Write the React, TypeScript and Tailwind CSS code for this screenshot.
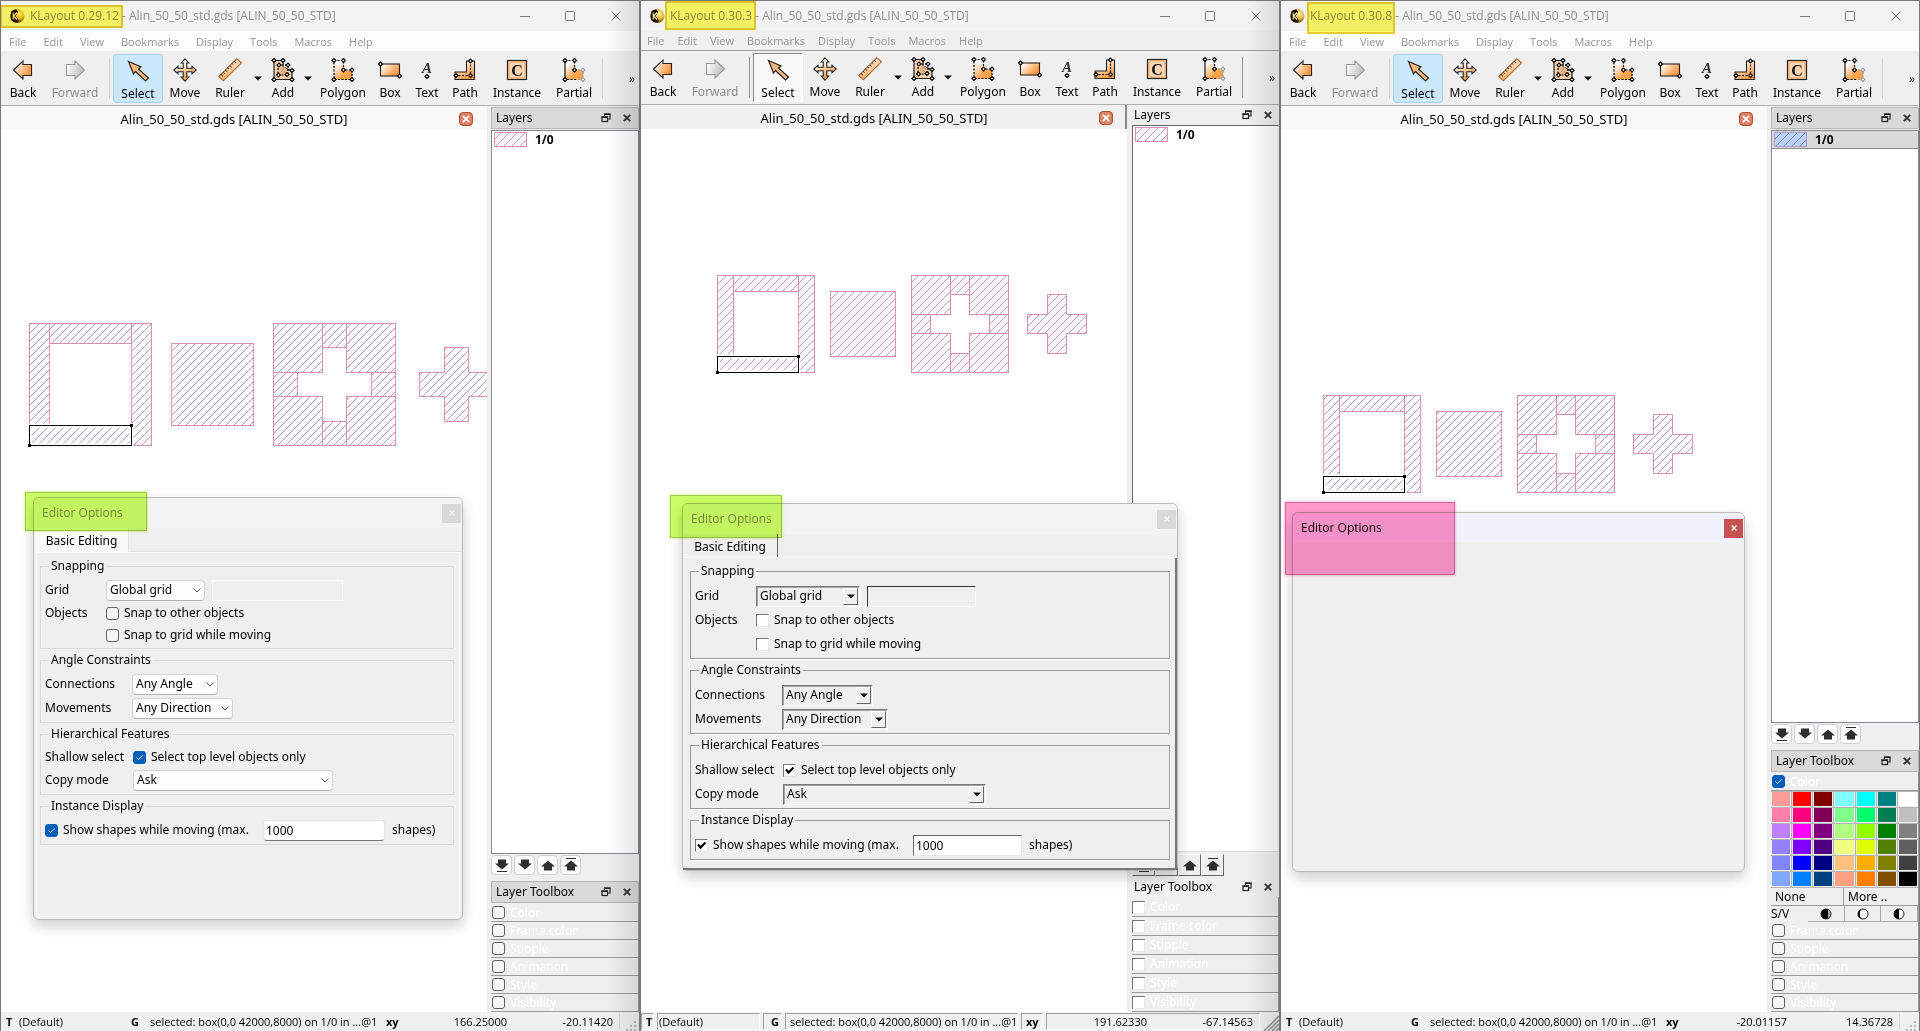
import clsx from "clsx";

type Pane = {
  version: string;
  classic?: boolean;
  file: string;
  mark: string;
  x: string;
  y: string;
  shapes: { x: number; y: number; scale: number };
  layerSelected?: boolean;
  paletteOpen?: boolean;
};

const FILE_NAME = "Alin_50_50_std.gds [ALIN_50_50_STD]";

const panes: Pane[] = [
  {
    version: "0.29.12",
    file: FILE_NAME,
    mark: "left-[-1px] top-1 h-[23px] w-[123px]",
    x: "166.25000",
    y: "-20.11420",
    shapes: { x: 28, y: 193, scale: 2.44 },
  },
  {
    version: "0.30.3",
    classic: true,
    file: FILE_NAME,
    mark: "left-6 top-0 h-[29px] w-[91px]",
    x: "191.62330",
    y: "-67.14563",
    shapes: { x: 76, y: 146, scale: 1.94 },
  },
  {
    version: "0.30.8",
    file: FILE_NAME,
    mark: "left-[26px] top-px h-8 w-[88px]",
    x: "-20.01157",
    y: "14.36728",
    shapes: { x: 42, y: 265, scale: 1.94 },
    layerSelected: true,
    paletteOpen: true,
  },
];

const menus = ["File", "Edit", "View", "Bookmarks", "Display", "Tools", "Macros", "Help"];

const palette = [
  "#ff9d9d", "#ff0000", "#800000", "#80ffff", "#00ffff", "#008080", "#ffffff",
  "#ff80a8", "#ff0080", "#800057", "#80ff8d", "#00ff6b", "#008050", "#c0c0c0",
  "#c080ff", "#ff00ff", "#800080", "#b0ff80", "#91ff00", "#008000", "#808080",
  "#9580ff", "#8000ff", "#500080", "#f0ff80", "#ddff00", "#508000", "#606060",
  "#8086ff", "#0000ff", "#000080", "#ffc280", "#ffae00", "#808000", "#404040",
  "#80a8ff", "#0080ff", "#004080", "#ffa080", "#ff8000", "#805000", "#000000",
];

/* ---------- icons ---------- */

function Defs() {
  return (
    <svg className="absolute h-0 w-0" aria-hidden="true">
      <defs>
        <linearGradient id="orange" x1="0" y1="0" x2="1" y2="0.6">
          <stop offset="0.1" stopColor="#fff" />
          <stop offset="0.9" stopColor="#ff9a40" />
        </linearGradient>
        <linearGradient id="orangeDown" x1="0.2" y1="0" x2="0.7" y2="1">
          <stop offset="0.1" stopColor="#fff" />
          <stop offset="0.9" stopColor="#ff9a40" />
        </linearGradient>
        <linearGradient id="silver" x1="0" y1="0" x2="1" y2="0.4">
          <stop offset="0.1" stopColor="#fff" />
          <stop offset="0.9" stopColor="#c4c4c4" />
        </linearGradient>
        <radialGradient id="gold" cx="0.65" cy="0.35" r="0.7">
          <stop offset="0" stopColor="#fff3b0" />
          <stop offset="0.5" stopColor="#e0b03a" />
          <stop offset="1" stopColor="#5a3c08" />
        </radialGradient>
        <pattern id="hatch" width="8" height="8" patternUnits="userSpaceOnUse">
          <path d="M-1 9L9 -1M-1 1L1 -1M7 9L9 7" stroke="#c878a0" strokeWidth="0.8" fill="none" />
        </pattern>
        <pattern id="hatchBlue" width="8" height="8" patternUnits="userSpaceOnUse">
          <rect width="8" height="8" fill="#b9d2f5" />
          <path d="M-1 9L9 -1M-1 1L1 -1M7 9L9 7" stroke="#7f74c8" strokeWidth="0.9" fill="none" />
        </pattern>
      </defs>
    </svg>
  );
}

/** small diamond handle */
function Node({ x, y, color = "#000" }: { x: number; y: number; color?: string }) {
  return (
    <path
      d={`M${x - 2} ${y}L${x} ${y - 2}L${x + 2} ${y}L${x} ${y + 2}Z`}
      fill="#fff"
      stroke={color}
      strokeWidth="1.1"
    />
  );
}

function ToolIcon({ name }: { name: string }) {
  const dash = { fill: "none", stroke: "#000", strokeWidth: 1.2, strokeDasharray: "2 1.5" };
  return (
    <svg viewBox="0 0 24 24" className="h-6 w-6 shrink-0" aria-hidden="true">
      {name === "Back" && (
        <path d="M2.5 12L12 3V6.5H20.5V17.5H12V21Z" fill="url(#orange)" stroke="#222" strokeWidth="1.1" />
      )}
      {name === "Forward" && (
        <path d="M21.5 12L12 3V6.5H3.5V17.5H12V21Z" fill="url(#silver)" stroke="#999" strokeWidth="1.1" />
      )}
      {name === "Select" && (
        <path
          d="M2.5 2.5L15 8L12.5 10L22.5 19L19.5 22L9.5 12.5L7.5 15Z"
          fill="#fbb57e"
          stroke="#222"
          strokeWidth="1.2"
        />
      )}
      {name === "Move" && (
        <path
          d="M12 0.8L15.8 5H13.8V10.2H19V8.2L23.2 12L19 15.8V13.8H13.8V19H15.8L12 23.2L8.2 19H10.2V13.8H5V15.8L0.8 12L5 8.2V10.2H10.2V5H8.2Z"
          fill="url(#orangeDown)"
          stroke="#222"
          strokeWidth="1.1"
        />
      )}
      {name === "Ruler" && (
        <>
          <path d="M0.8 18.6L18.6 0.8L23.4 4.8L5.4 22.8Z" fill="url(#orangeDown)" stroke="#a2602c" strokeWidth="1.1" />
          <path
            d="M3 16.5L5 18.3M5.2 14.3L6.6 15.6M7.4 12L9.4 13.8M9.6 9.8L11 11.1M11.8 7.6L13.8 9.4M14 5.4L15.4 6.7M16.2 3.2L18.2 5"
            stroke="#222"
            strokeWidth="1"
          />
        </>
      )}
      {name === "Add" && (
        <>
          <path d="M3 2.5H12V9L21 13V21.5H3Z" fill="#fbd2b0" stroke="#222" strokeWidth="1.2" />
          <path d="M7 7H17V17H7Z" {...dash} />
          <circle cx="12" cy="12.5" r="3.5" fill="#ffae6c" />
          <circle cx="12" cy="12.5" r="1.3" fill="#ddd" stroke="#999" strokeWidth="0.7" />
          <Node x={3} y={2.5} />
          <Node x={12} y={2.5} />
          <Node x={8} y={7} />
          <Node x={17} y={7} />
          <Node x={21} y={12.5} />
          <Node x={7.5} y={17} />
          <Node x={16} y={16.5} />
          <Node x={3} y={21.5} />
          <Node x={21} y={21.5} />
        </>
      )}
      {(name === "Polygon" || name === "Partial") && (
        <>
          <path d="M3 2.5H12.5V12H21V21.5H3Z" fill="url(#orangeDown)" />
          <path d="M11 12H21V17Q21 21 17 21.5H9Z" fill="#ffa24c" opacity="0.7" />
          {name === "Polygon" ? (
            <path d="M3 2.5H12.5V12H21V21.5H3Z" {...dash} />
          ) : (
            <>
              <path d="M12.5 12H21V21.5H14" {...dash} stroke="#999" />
              <path d="M14 21.5H3M3 2.5H12.5V12" {...dash} />
              <path d="M3 21.5V2.5" stroke="#000" strokeWidth="1.1" />
            </>
          )}
          <Node x={3} y={2.5} />
          <Node x={12.5} y={2.5} />
          <Node x={12.5} y={12} />
          <Node x={21} y={12} color={name === "Partial" ? "#999" : "#000"} />
          <Node x={21} y={21.5} color={name === "Partial" ? "#999" : "#000"} />
          <Node x={3} y={21.5} />
        </>
      )}
      {name === "Box" && (
        <>
          <rect x="2.5" y="6" width="19" height="12" fill="url(#orange)" stroke="#222" strokeWidth="1.1" />
          <Node x={2.5} y={6} />
          <Node x={21.5} y={18} />
        </>
      )}
      {name === "Text" && (
        <>
          <text
            x="12"
            y="14.5"
            textAnchor="middle"
            fontSize="15"
            fontStyle="italic"
            fontWeight="bold"
            fontFamily="Liberation Serif, serif"
            fill="#333"
          >
            A
          </text>
          <Node x={12} y={18.5} />
        </>
      )}
      {name === "Path" && (
        <>
          <path d="M13.5 3H21.5V21.5H2V14H13.5Z" fill="url(#orangeDown)" stroke="#222" strokeWidth="1.1" />
          <path d="M17.5 3V17.5H3" {...dash} />
          <Node x={17.5} y={3} />
          <Node x={17.5} y={17.5} />
          <Node x={3} y={17.5} />
        </>
      )}
      {name === "Instance" && (
        <>
          <rect x="2.5" y="2.5" width="19" height="19" fill="#fcc08a" stroke="#222" strokeWidth="1.2" />
          <rect x="5" y="5" width="14" height="14" fill="#fff" opacity="0.35" />
          <text
            x="12"
            y="17.5"
            textAnchor="middle"
            fontSize="16"
            fontWeight="bold"
            fontFamily="Liberation Serif, serif"
            fill="#111"
          >
            C
          </text>
        </>
      )}
    </svg>
  );
}

function Logo() {
  return (
    <svg viewBox="0 0 16 16" className="h-4 w-4 shrink-0" aria-hidden="true">
      <circle cx="8.5" cy="8" r="7" fill="url(#gold)" />
      <path d="M2.5 3Q5 1 7.5 1.5L9 4L6.5 8L10 12.5L8 14.5Q4 14.5 2.5 12.5Q0.5 8 2.5 3Z" fill="#1b1408" />
      <path d="M4.2 4.5V11.5M8 4.5L4.6 8L8 11.5" stroke="#f6e6a8" strokeWidth="1.1" fill="none" />
    </svg>
  );
}

function FloatIcon() {
  return (
    <svg viewBox="0 0 10 10" className="h-[10px] w-[10px]" aria-hidden="true">
      <path d="M3.5 3V1H9V6H7" fill="none" stroke="#222" strokeWidth="1.2" />
      <path d="M3 1.2H9.5M0.5 4.2H7" stroke="#222" strokeWidth="1.6" />
      <rect x="1" y="4" width="5.5" height="4.5" fill="none" stroke="#222" strokeWidth="1.2" />
    </svg>
  );
}

function CrossIcon({ className }: { className?: string }) {
  return (
    <svg viewBox="0 0 8 8" className={clsx("h-2 w-2", className)} aria-hidden="true">
      <path d="M0.8 0.8L7.2 7.2M7.2 0.8L0.8 7.2" stroke="currentColor" strokeWidth="1.9" />
    </svg>
  );
}

function ArrowIcon({ down, bar }: { down?: boolean; bar?: boolean }) {
  return (
    <svg viewBox="0 0 16 16" className="h-4 w-4" aria-hidden="true">
      <g transform={down ? "rotate(180 8 8)" : undefined}>
        <path d="M8 3.5L15 9.5H12V13.5H4V9.5H1Z" fill="#2e2e2e" />
        {bar && <path d="M3 1.5H13" stroke="#2e2e2e" strokeWidth="1" />}
      </g>
    </svg>
  );
}

function Triangle() {
  return (
    <svg viewBox="0 0 8 5" className="h-[5px] w-2" aria-hidden="true">
      <path d="M0 0.5H8L4 4.5Z" fill="#111" />
    </svg>
  );
}

/* ---------- small controls ---------- */

function Check({ id, classic, checked }: { id: string; classic?: boolean; checked?: boolean }) {
  return (
    <span className="grid shrink-0 place-items-center">
      <input
        id={id}
        type="checkbox"
        defaultChecked={checked}
        className={clsx(
          "col-start-1 row-start-1 h-[13px] w-[13px] appearance-none",
          classic
            ? "border border-t-[#777] border-r-[#e8e8e8] border-b-[#e8e8e8] border-l-[#777] bg-white"
            : "rounded-[3px] border border-[#606060] bg-[#f5f5f5] checked:border-[#005fb8] checked:bg-[#005fb8]",
        )}
      />
      {checked && (
        <svg viewBox="0 0 13 13" className="pointer-events-none col-start-1 row-start-1 h-[13px] w-[13px]">
          {classic ? (
            <path d="M3 5.5L5.5 8.5L10.5 3.5" fill="none" stroke="#000" strokeWidth="2.2" />
          ) : (
            <path d="M3.5 6.5L5.5 8.5L9.5 4.5" fill="none" stroke="#fff" strokeWidth="1" />
          )}
        </svg>
      )}
    </span>
  );
}

function Combo({
  id,
  value,
  classic,
  width,
}: {
  id: string;
  value: string;
  classic?: boolean;
  width: string;
}) {
  return (
    <span className={clsx("grid shrink-0 items-center", width)}>
      <select
        id={id}
        defaultValue={value}
        className={clsx(
          "col-start-1 row-start-1 h-[21px] w-full appearance-none",
          classic
            ? "border border-t-[#777] border-r-white border-b-white border-l-[#777] bg-[#efefef] pl-[3px] shadow-[inset_1px_1px_#a5a5a5]"
            : "rounded-sm border border-[#d4d4d4] border-b-[#b4b4b4] bg-[#fdfdfd] pl-[3px]",
        )}
      >
        <option>{value}</option>
      </select>
      {classic ? (
        <span className="pointer-events-none col-start-1 row-start-1 mr-0.5 grid h-[17px] w-[15px] place-items-center justify-self-end border border-t-white border-r-[#666] border-b-[#666] border-l-white bg-[#efefef]">
          <Triangle />
        </span>
      ) : (
        <svg
          viewBox="0 0 8 5"
          className="pointer-events-none col-start-1 row-start-1 mr-1 h-[5px] w-2 justify-self-end"
        >
          <path d="M0.5 0.5L4 4L7.5 0.5" fill="none" stroke="#555" strokeWidth="1" />
        </svg>
      )}
    </span>
  );
}

function Group({ title, classic, children }: { title: string; classic?: boolean; children: React.ReactNode }) {
  return (
    <fieldset
      className={clsx(
        "min-w-0 border pl-1",
        classic ? "border-[#999] shadow-[1px_1px_#fff]" : "border-[#dadada]",
      )}
    >
      <legend className="ml-1 h-4 px-0.5 leading-4">{title}</legend>
      <div className={clsx("flex flex-col gap-0.5 pb-[3px]", classic ? "pt-1.5" : "pt-[5px]")}>{children}</div>
    </fieldset>
  );
}

function EditorForm({ classic }: { classic?: boolean }) {
  const id = classic ? "classic" : "modern";
  const row = "flex h-[22px] items-center";
  const checkRow = clsx("flex items-center", classic ? "h-[22px]" : "h-5");
  const field = classic
    ? "border border-t-[#333] border-r-white border-b-white border-l-[#333]"
    : "border border-[#f9f9f9]";
  return (
    <form className="flex flex-col gap-[3px]">
      <Group title="Snapping" classic={classic}>
        <div className={row}>
          <label htmlFor={`${id}-grid`} className="w-[61px]">
            Grid
          </label>
          <Combo id={`${id}-grid`} value="Global grid" classic={classic} width={classic ? "w-[104px]" : "w-[99px]"} />
          <input
            aria-label="Grid value"
            className={clsx("ml-[7px] h-[21px] bg-[#efefef]", field, classic ? "w-[109px]" : "w-[131px]")}
          />
        </div>
        <div className={checkRow}>
          <span className="w-[61px]">Objects</span>
          <Check id={`${id}-snap-objects`} classic={classic} />
          <label htmlFor={`${id}-snap-objects`} className="ml-[5px]">
            Snap to other objects
          </label>
        </div>
        <div className={clsx(checkRow, "pl-[61px]")}>
          <Check id={`${id}-snap-grid`} classic={classic} />
          <label htmlFor={`${id}-snap-grid`} className="ml-[5px]">
            Snap to grid while moving
          </label>
        </div>
      </Group>
      <Group title="Angle Constraints" classic={classic}>
        <div className={row}>
          <label htmlFor={`${id}-connections`} className="w-[87px]">
            Connections
          </label>
          <Combo id={`${id}-connections`} value="Any Angle" classic={classic} width={classic ? "w-[91px]" : "w-[86px]"} />
        </div>
        <div className={row}>
          <label htmlFor={`${id}-movements`} className="w-[87px]">
            Movements
          </label>
          <Combo id={`${id}-movements`} value="Any Direction" classic={classic} width={classic ? "w-[106px]" : "w-[101px]"} />
        </div>
      </Group>
      <Group title="Hierarchical Features" classic={classic}>
        <div className={checkRow}>
          <span className="w-[88px]">Shallow select</span>
          <Check id={`${id}-top-level`} classic={classic} checked />
          <label htmlFor={`${id}-top-level`} className="ml-[5px]">
            Select top level objects only
          </label>
        </div>
        <div className={row}>
          <label htmlFor={`${id}-copy`} className="w-[88px]">
            Copy mode
          </label>
          <Combo id={`${id}-copy`} value="Ask" classic={classic} width={classic ? "w-[203px]" : "w-[200px]"} />
        </div>
      </Group>
      <Group title="Instance Display" classic={classic}>
        <div className={row}>
          <Check id={`${id}-show`} classic={classic} checked />
          <label htmlFor={`${id}-show`} className="ml-[5px] w-[200px]">
            Show shapes while moving (max.
          </label>
          <input
            aria-label="Maximum shapes"
            defaultValue="1000"
            className={clsx(
              "h-[21px] bg-white px-0.5",
              classic
                ? "w-[109px] border border-t-[#666] border-r-[#e8e8e8] border-b-[#e8e8e8] border-l-[#666]"
                : "w-[122px] rounded-sm border border-[#e6e6e6] border-b-[#777]",
            )}
          />
          <span className="ml-[7px]">shapes)</span>
        </div>
      </Group>
    </form>
  );
}

/* ---------- floating dialogs ---------- */

function DialogTitle({ active }: { active?: boolean }) {
  return (
    <header
      className={clsx(
        "flex h-[30px] shrink-0 items-center justify-between rounded-t-[5px] pr-px pl-2 font-['Open_Sans',sans-serif]",
        active ? "bg-[#f1f2f9] text-black" : "bg-[#f3f3f3] text-[#8a8a8a]",
      )}
    >
      <h2>Editor Options</h2>
      <button
        type="button"
        aria-label="Close"
        className={clsx(
          "grid h-[19px] w-[19px] place-items-center",
          active ? "bg-[#c75050] text-white" : "bg-[#d9d9d9] text-[#f3f3f3]",
        )}
      >
        <CrossIcon className="h-[6px] w-[6px]" />
      </button>
    </header>
  );
}

function EditorDialog({ pane }: { pane: Pane }) {
  const shell = "absolute flex flex-col rounded-md border border-[#bcbcbc] bg-[#efefef] shadow-[0_6px_14px_rgba(0,0,0,0.2)]";
  if (pane.paletteOpen) {
    return (
      <>
        <div className={clsx(shell, "top-[511px] left-[11px] h-[360px] w-[453px]")}>
          <DialogTitle active />
        </div>
        <div className="pointer-events-none absolute top-[501px] left-1 h-[73px] w-[170px] border border-[#d8639f] bg-[#ff99cc] mix-blend-multiply shadow-[0_0_3px_#ff99cc]" />
      </>
    );
  }
  if (pane.classic) {
    return (
      <>
        <div className={clsx(shell, "top-[502px] left-[41px] w-[496px]")}>
          <DialogTitle />
          <div className="flex h-6 border-b border-white">
            <button type="button" className="w-[95px] border-r border-r-[#666] pt-[3px]">
              Basic Editing
            </button>
          </div>
          <div className="border-r-2 border-b-2 border-[#777] pt-[5px] pr-[5px] pb-2 pl-[7px]">
            <EditorForm classic />
          </div>
        </div>
        <div className="pointer-events-none absolute top-[494px] left-[29px] h-[43px] w-28 border border-[#9fc94e] bg-[#ccff66] mix-blend-multiply shadow-[0_0_3px_#ccff66]" />
      </>
    );
  }
  return (
    <>
      <div className={clsx(shell, "top-[496px] left-8 h-[423px] w-[430px]")}>
        <DialogTitle />
        <div className="flex h-6 pl-px">
          <button type="button" className="w-[94px] border-r border-[#e2e2e2] bg-[#f9f9f9] pt-0.5">
            Basic Editing
          </button>
          <span className="flex-1 border-b border-[#e2e2e2]" />
        </div>
        <div className="mx-0.5 mb-0.5 flex-1 border border-[#fafafa] pt-[5px] pr-[5px] pl-[3px]">
          <EditorForm />
        </div>
      </div>
      <div className="pointer-events-none absolute top-[491px] left-6 h-[39px] w-[122px] border border-[#9fc94e] bg-[#ccff66] mix-blend-multiply shadow-[0_0_3px_#ccff66]" />
    </>
  );
}

/* ---------- drawing area ---------- */

// boxes are [x, y, width, height] in micrometres, y pointing down
const boxes = [
  [0, 0, 8, 42],
  [8, 0, 34, 8],
  [42, 0, 8, 50],
  [58, 8, 34, 34],
  [100, 0, 20, 20],
  [120, 0, 10, 10],
  [130, 0, 20, 20],
  [100, 20, 10, 10],
  [140, 20, 10, 10],
  [100, 30, 20, 20],
  [120, 40, 10, 10],
  [130, 30, 20, 20],
];

const cross = [
  [170, 10], [180, 10], [180, 20], [190, 20], [190, 30], [180, 30],
  [180, 40], [170, 40], [170, 30], [160, 30], [160, 20], [170, 20],
];

function Canvas({ shapes }: { shapes: Pane["shapes"] }) {
  const px = (v: number) => Math.round(v * shapes.scale) + shapes.x + 0.5;
  const py = (v: number) => Math.round(v * shapes.scale) + shapes.y + 0.5;
  return (
    <div className="relative min-h-0 flex-1 bg-white">
      <svg className="absolute inset-0 h-full w-full" role="img" aria-label="Layout">
        <g fill="url(#hatch)" stroke="#d493b3" strokeWidth="1">
          {boxes.map(([x, y, w, h]) => (
            <rect key={`${x}-${y}`} x={px(x)} y={py(y)} width={px(x + w) - px(x)} height={py(y + h) - py(y)} />
          ))}
          <polygon points={cross.map(([x, y]) => `${px(x)},${py(y)}`).join(" ")} />
        </g>
        <rect
          x={px(0)}
          y={py(42)}
          width={px(42) - px(0)}
          height={py(50) - py(42)}
          fill="url(#hatch)"
          stroke="#fff"
          strokeWidth="4"
        />
        <rect
          x={px(0)}
          y={py(42)}
          width={px(42) - px(0)}
          height={py(50) - py(42)}
          fill="none"
          stroke="#000"
        />
        <rect x={px(0) - 1.5} y={py(50) - 1.5} width="3" height="3" />
        <rect x={px(42) - 1.5} y={py(42) - 1.5} width="3" height="3" />
      </svg>
    </div>
  );
}

/* ---------- main window parts ---------- */

function TitleBar({ pane }: { pane: Pane }) {
  return (
    <header className="flex h-[30px] shrink-0 items-center bg-[#f3f3f3] pl-2 font-['Open_Sans',sans-serif] text-[#8c8c8c]">
      <Logo />
      <h1 className="ml-[5px] flex-1 truncate">
        KLayout {pane.version} - {pane.file}
      </h1>
      <div className="flex items-center">
        <button type="button" aria-label="Minimize" className="grid w-[46px] place-items-center">
          <svg viewBox="0 0 10 10" className="h-[10px] w-[10px]">
            <path d="M0 5.5H10" stroke="#777" />
          </svg>
        </button>
        <button type="button" aria-label="Maximize" className="grid w-11 place-items-center">
          <svg viewBox="0 0 10 10" className="h-[10px] w-[10px]">
            <rect x="0.5" y="0.5" width="9" height="9" rx="1" fill="none" stroke="#777" />
          </svg>
        </button>
        <button type="button" aria-label="Close" className="grid w-[47px] place-items-center">
          <svg viewBox="0 0 10 10" className="h-[10px] w-[10px]">
            <path d="M0.5 0.5L9.5 9.5M9.5 0.5L0.5 9.5" stroke="#777" />
          </svg>
        </button>
      </div>
    </header>
  );
}

function MenuBar({ classic }: { classic?: boolean }) {
  return (
    <nav
      className={clsx(
        "flex shrink-0 items-center border-b pt-px font-['Open_Sans',sans-serif] text-[11px] text-[#959595]",
        classic ? "h-5 gap-[13px] border-[#a0a0a0] bg-[#f0f0f0] pl-1.5" : "h-[21px] gap-[17px] border-[#ececec] bg-[#fdfdfd] pl-2",
      )}
    >
      {menus.map((item) => (
        <button type="button" key={item}>
          {item}
        </button>
      ))}
    </nav>
  );
}

const tools: { name: string; width: string; more?: boolean }[] = [
  { name: "Move", width: "w-11" },
  { name: "Ruler", width: "w-[46px]", more: true },
  { name: "Add", width: "w-10", more: true },
  { name: "Polygon", width: "w-[60px]" },
  { name: "Box", width: "w-[34px]" },
  { name: "Text", width: "w-10" },
  { name: "Path", width: "w-9" },
  { name: "Instance", width: "w-[68px]" },
  { name: "Partial", width: "w-[46px]" },
];

function Tool({ name, className }: { name: string; className: string }) {
  return (
    <button type="button" className={clsx("flex shrink-0 flex-col items-center pt-1", className)}>
      <ToolIcon name={name} />
      <span className="mt-[3px] leading-4">{name}</span>
    </button>
  );
}

function ToolBar({ classic }: { classic?: boolean }) {
  const rule = clsx("my-1 w-px", classic ? "bg-[#999]" : "bg-[#d5d5d5]");
  return (
    <div
      role="toolbar"
      className="flex h-[54px] shrink-0 items-stretch overflow-hidden border-b border-[#b0b0b0] bg-[#efefef] py-0.5"
    >
      <Tool name="Back" className="w-11" />
      <Tool name="Forward" className="w-[60px] text-[#8c8c8c]" />
      <span className="flex w-2 shrink-0 justify-center">
        <span className={rule} />
      </span>
      <Tool
        name="Select"
        className={clsx(
          "w-[50px] border",
          classic
            ? "border-t-[#888] border-r-white border-b-white border-l-[#888] bg-[#f8f8f8]"
            : "rounded-[3px] border-[#a9d1f2] bg-[#cce8ff]",
        )}
      />
      {tools.map((tool) => (
        <div key={tool.name} className="flex shrink-0">
          <Tool name={tool.name} className={tool.width} />
          {tool.more && (
            <button type="button" aria-label={`${tool.name} options`} className="grid w-[10px] place-items-center">
              <Triangle />
            </button>
          )}
        </div>
      ))}
      <span className="flex w-[10px] shrink-0 justify-center">
        <span className={rule} />
      </span>
      <button type="button" aria-label="More tools" className="ml-auto w-[14px] shrink-0 text-[#333]">
        »
      </button>
    </div>
  );
}

function DockTitle({ title, classic }: { title: string; classic?: boolean }) {
  return (
    <header
      className={clsx(
        "flex shrink-0 items-center",
        classic ? "h-5 pr-[7px] pl-0.5" : "h-[22px] border border-[#b4b4b4] bg-[#d9d9d9] pr-[7px] pl-1",
      )}
    >
      <h2 className="flex-1">{title}</h2>
      <button type="button" aria-label={`Float ${title}`} className="mr-3">
        <FloatIcon />
      </button>
      <button type="button" aria-label={`Close ${title}`} className="text-[#333]">
        <CrossIcon />
      </button>
    </header>
  );
}

function Palette() {
  return (
    <>
      <div className="grid grid-cols-7 gap-px bg-[#b5b5b5] pt-px pb-px">
        {palette.map((color) => (
          <button
            type="button"
            key={color}
            aria-label={color}
            className="h-[15px] border-x border-b border-[#eee]"
            style={{ backgroundColor: color }}
          />
        ))}
      </div>
      <div className="flex h-[18px] border-b border-[#999]">
        <button type="button" className="w-[73px] border-r border-[#999] pl-1 text-left">
          None
        </button>
        <button type="button" className="pl-1">
          More ..
        </button>
      </div>
      <div className="flex h-4">
        <span className="w-[37px] leading-4">S/V</span>
        {[0, 1, 2].map((i) => (
          <button
            type="button"
            key={i}
            aria-label={["Darker", "Brighter", "Contrast"][i]}
            className="grid flex-1 place-items-center border-r border-b border-[#aaa]"
          >
            <svg viewBox="0 0 12 12" className="h-3 w-3">
              <circle cx="6" cy="6" r="5" fill={i === 0 ? "#aaa" : "#fff"} stroke="#222" strokeWidth="1" />
              <path
                d={i === 0 ? "M8 1.4A5 5 0 1 0 8 10.6Z" : i === 1 ? "M4 1.4A5 5 0 0 0 4 10.6Q1.5 6 4 1.4Z" : "M6 1A5 5 0 0 0 6 11Z"}
                fill="#000"
              />
            </svg>
          </button>
        ))}
      </div>
    </>
  );
}

function SidePanel({ pane }: { pane: Pane }) {
  const { classic, paletteOpen } = pane;
  const sections = ["Color", "Frame color", "Stipple", "Animation", "Style", "Visibility"];
  return (
    <aside className={clsx("flex w-[152px] shrink-0 flex-col bg-[#efefef]", classic ? "pl-[5px]" : "pl-1")}>
      {!classic && <div className="h-px shrink-0" />}
      <DockTitle title="Layers" classic={classic} />
      <ul
        className={clsx(
          "min-h-0 flex-1 border bg-white",
          classic ? "mb-0.5 border-t-[#666] border-r-[#eee] border-b-[#ddd] border-l-[#666]" : "mt-px border-[#828790]",
        )}
      >
        <li
          className={clsx(
            "flex h-[17px] items-center pl-0.5",
            pane.layerSelected && "bg-[#d9d9d9] outline outline-[#8a8a8a]",
          )}
        >
          <svg className="h-[15px] w-[33px]" aria-hidden="true">
            <rect
              x="0.5"
              y="0.5"
              width="32"
              height="14"
              fill={pane.layerSelected ? "url(#hatchBlue)" : "url(#hatch)"}
              stroke={pane.layerSelected ? "#a79bd0" : "#d493b3"}
            />
          </svg>
          <b className="ml-2">1/0</b>
        </li>
      </ul>
      <div className={clsx("flex shrink-0", classic ? "mb-px h-[22px]" : "mt-px mb-1.5 h-5 gap-0.5")}>
        {["Bottom", "Down", "Up", "Top"].map((name, i) => (
          <button
            type="button"
            key={name}
            aria-label={name}
            className={clsx(
              "grid place-items-center",
              classic
                ? "w-[23px] border border-t-white border-r-[#666] border-b-[#666] border-l-white"
                : "w-[21px] rounded border border-[#d0d0d0] bg-[#fdfdfd]",
            )}
          >
            <ArrowIcon down={i < 2} bar={i === 0 || i === 3} />
          </button>
        ))}
      </div>
      <DockTitle title="Layer Toolbox" classic={classic} />
      <div className="shrink-0 border-r border-[#999] pt-px">
        {sections.map((name) => {
          const open = paletteOpen && name === "Color";
          const id = `${pane.version}-${name}`;
          return (
            <div key={name}>
              <div
                className={clsx(
                  "flex items-center border-b border-b-[#9a9a9a] text-white",
                  classic ? "h-[19px]" : "h-[18px] pl-px",
                )}
              >
                <Check id={id} classic={classic} checked={open} />
                <label htmlFor={id} className="ml-[5px]">
                  {name}
                </label>
              </div>
              {open && (
                <div className="text-black">
                  <Palette />
                </div>
              )}
            </div>
          );
        })}
      </div>
    </aside>
  );
}

function StatusBar({ pane }: { pane: Pane }) {
  const cell = clsx(
    "h-[17px] shrink-0 overflow-hidden whitespace-nowrap border leading-[15px]",
    pane.classic
      ? "border-t-[#a0a0a0] border-r-white border-b-white border-l-[#a0a0a0]"
      : "border-transparent",
  );
  return (
    <footer className="flex h-[19px] shrink-0 items-center gap-[3px] bg-[#f0f0f0] font-['Open_Sans',sans-serif] text-[11px]">
      <b className={clsx(cell, "w-[13px] pl-1")}>T</b>
      <span className={clsx(cell, "w-[103px] pl-px")}>(Default)</span>
      <b className={clsx(cell, "w-[19px] pl-[7px]")}>G</b>
      <span className={clsx(cell, "w-[233px] pl-1")}>selected: box(0,0 42000,8000) on 1/0 in ...@1</span>
      <b className={clsx(cell, "w-[22px] pl-1")}>xy</b>
      <span className={clsx(cell, "grid flex-1 grid-cols-2 text-right", !pane.classic && "border-r-[#d5d5d5]")}>
        <span className="pr-[6px]">{pane.x}</span>
        <span className="pr-[6px]">{pane.y}</span>
      </span>
      <svg viewBox="0 0 16 16" className="h-4 w-4 shrink-0 self-end" aria-hidden="true">
        {pane.classic ? (
          <path d="M1 16L16 1M5 16L16 5M9 16L16 9M13 16L16 13" stroke="#888" strokeWidth="1.3" />
        ) : (
          <path d="M11 6h2v2h-2zM7 10h2v2h-2zM11 10h2v2h-2zM3 14h2v2h-2zM7 14h2v2h-2zM11 14h2v2h-2z" fill="#b8b8b8" />
        )}
      </svg>
    </footer>
  );
}

function AppWindow({ pane, shaded }: { pane: Pane; shaded: boolean }) {
  return (
    <section className="relative isolate flex min-w-0 flex-col overflow-hidden border-x border-t border-[#777] bg-[#efefef]">
      <TitleBar pane={pane} />
      <MenuBar classic={pane.classic} />
      <ToolBar classic={pane.classic} />
      <div className="flex min-h-0 flex-1">
        <main className="flex min-w-0 flex-1 flex-col">
          <div
            className={clsx(
              "flex h-6 shrink-0 items-center pt-px pl-2",
              pane.classic ? "border-r-2 border-[#888] bg-[#f0f0f0] pr-3" : "bg-[#f9f9f9] pr-[14px]",
            )}
          >
            <span className="flex-1 truncate text-center text-[13px]">{pane.file}</span>
            <button
              type="button"
              aria-label="Close tab"
              className="grid h-[14px] w-[14px] place-items-center rounded-sm border border-[#b4502f] bg-[#dd8263] text-white"
            >
              <CrossIcon />
            </button>
          </div>
          <Canvas shapes={pane.shapes} />
        </main>
        <SidePanel pane={pane} />
      </div>
      <StatusBar pane={pane} />
      {shaded && (
        <div className="pointer-events-none absolute inset-y-0 right-0 w-8 bg-linear-to-r from-transparent to-black/10" />
      )}
      <EditorDialog pane={pane} />
      <div
        className={clsx(
          "pointer-events-none absolute border-2 border-[#e6cc33] bg-[#fffc66] mix-blend-multiply",
          pane.mark,
        )}
      />
    </section>
  );
}

export default function App() {
  return (
    <div className="grid h-screen grid-cols-3 overflow-hidden font-['Noto_Sans',sans-serif] text-[12px] leading-4 text-black">
      <Defs />
      {panes.map((pane, i) => (
        <AppWindow key={pane.version} pane={pane} shaded={i < 2} />
      ))}
    </div>
  );
}
